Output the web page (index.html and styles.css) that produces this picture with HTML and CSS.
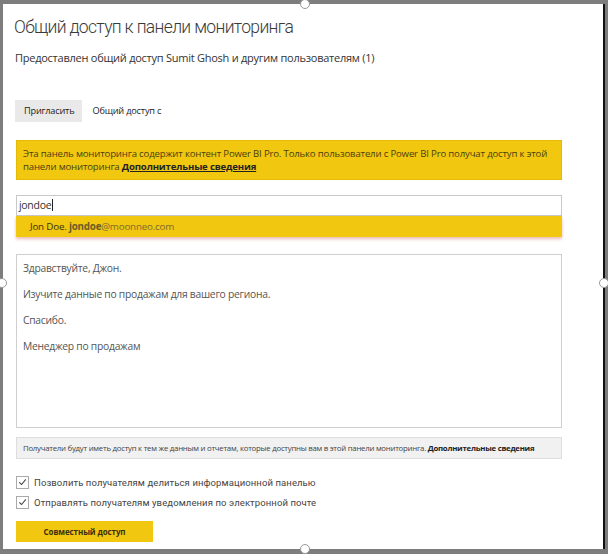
FILE: index.html
```html
<!DOCTYPE html>
<html lang="ru">
<head>
<meta charset="utf-8">
<link rel="stylesheet" href="styles.css">
</head>
<body>
<div class="dialog">
  <span class="handle handle-top"></span>
  <span class="handle handle-left"></span>
  <span class="handle handle-right"></span>
  <span class="handle handle-bottom"></span>

  <h1 class="title">Общий доступ к панели мониторинга</h1>
  <p class="subtitle">Предоставлен общий доступ Sumit Ghosh и другим пользователям (1)</p>

  <div class="tabs">
    <span class="tab tab-active">Пригласить</span>
    <span class="tab">Общий доступ с</span>
  </div>

  <div class="banner"><p class="banner-line">Эта панель мониторинга содержит контент Power BI Pro. Только пользователи с Power BI Pro получат доступ к этой</p><p class="banner-line">панели мониторинга <a class="banner-link">Дополнительные сведения</a></p></div>

  <div class="picker">
    <div class="input">jondoe<span class="caret"></span></div>
    <div class="suggestion"><span class="s-name">Jon Doe.</span> <span class="s-mail"><b>jondoe</b>@moonneo.com</span></div>
  </div>

  <div class="message">
    <p>Здравствуйте, Джон.</p>
    <p>Изучите данные по продажам для вашего региона.</p>
    <p>Спасибо.</p>
    <p>Менеджер по продажам</p>
  </div>

  <div class="note">Получатели будут иметь доступ к тем же данным и отчетам, которые доступны вам в этой панели мониторинга. <b>Дополнительные сведения</b></div>

  <label class="check"><span class="box"><svg viewBox="0 0 12 12" width="12" height="12"><path d="M2.5 6.3 L5 8.7 L9.6 3.2" fill="none" stroke="#444" stroke-width="1.1"/></svg></span>Позволить получателям делиться информационной панелью</label>
  <label class="check"><span class="box"><svg viewBox="0 0 12 12" width="12" height="12"><path d="M2.5 6.3 L5 8.7 L9.6 3.2" fill="none" stroke="#444" stroke-width="1.1"/></svg></span>Отправлять получателям уведомления по электронной почте</label>

  <button class="share">Совместный доступ</button>
</div>
</body>
</html>
```

FILE: styles.css
```css
html, body {
  margin: 0;
  padding: 0;
}
body {
  background: #7d7d7d;
  width: 608px;
  height: 554px;
  overflow: hidden;
  font-family: "Open Sans", "Noto Sans", sans-serif;
  color: #333;
}
.dialog {
  position: relative;
  box-sizing: border-box;
  margin: 4px 0 0 3px;
  width: 602px;
  height: 545px;
  background: #fff;
  border-right: 2px solid #111;
  padding: 10px 40px 0 11px;
}
.handle {
  position: absolute;
  width: 8px;
  height: 8px;
  border-radius: 50%;
  background: #fff;
  border: 1px solid #999;
}
.handle-top { top: -5px; left: 297px; }
.handle-bottom { bottom: -5px; left: 297px; }
.handle-left { left: -6px; top: 274px; }
.handle-right { right: -6px; top: 274px; }

.title {
  margin: 0;
  font-family: Roboto, "Open Sans", sans-serif;
  font-size: 17.5px;
  font-weight: 300;
  letter-spacing: -0.65px;
  color: #3a3a3a;
  line-height: 26px;
}
.subtitle {
  margin: 11px 0 0 1px;
  font-size: 11px;
  letter-spacing: -0.25px;
  line-height: 14px;
  color: #333;
}
.tabs {
  display: flex;
  align-items: center;
  margin: 35px 0 0 1px;
  height: 22px;
}
.tab {
  font-size: 9.2px;
  letter-spacing: -0.2px;
  color: #222;
  padding: 0 8px;
  line-height: 22px;
}
.tab-active {
  background: #e9e9e9;
  padding: 0 8px 0 9px;
  margin-right: 2px;
}
.banner {
  margin: 18px 0 0 2px;
  width: 546px;
  height: 40px;
  box-sizing: border-box;
  background: #f2c70f;
  border: 1px solid #e5ba05;
  padding: 6px 8px 0 6px;
  font-size: 9.6px;
  letter-spacing: -0.17px;
  color: #4a3f10;
}
.banner-line {
  margin: 0;
  line-height: 13px;
  white-space: nowrap;
}
.banner-link {
  font-weight: 700;
  color: #222;
  text-decoration: underline;
}
.picker {
  margin: 15px 0 0 2px;
  width: 546px;
}
.input {
  box-sizing: border-box;
  height: 21px;
  border: 1px solid #c8c8c8;
  padding: 0 2px;
  font-size: 10.5px;
  letter-spacing: -0.3px;
  line-height: 19px;
  color: #333;
}
.caret {
  display: inline-block;
  width: 1px;
  height: 12px;
  background: #222;
  vertical-align: -2px;
  margin-left: 1px;
}
.suggestion {
  height: 21px;
  background: #f2c70f;
  padding-left: 14px;
  font-size: 9.8px;
  letter-spacing: -0.2px;
  line-height: 21px;
  color: #3a3010;
  box-shadow: 0 2px 3px rgba(220, 120, 110, 0.5);
}
.s-mail {
  color: #7a6b33;
}
.s-mail b {
  color: #6b5c28;
}
.message {
  margin: 17px 0 0 2px;
  width: 546px;
  height: 174px;
  box-sizing: border-box;
  border: 1px solid #cfcfcf;
  padding: 6px 6px;
  font-size: 10.3px;
  letter-spacing: -0.25px;
  color: #555;
}
.message p {
  margin: 0;
  line-height: 14px;
  margin-bottom: 12px;
}
.note {
  margin: 9px 0 0 2px;
  width: 546px;
  height: 22px;
  box-sizing: border-box;
  background: #f1f1f1;
  border: 1px solid #dedede;
  padding: 0 6px;
  font-size: 7.8px;
  letter-spacing: -0.25px;
  line-height: 20px;
  white-space: nowrap;
  color: #444;
}
.note b {
  color: #222;
}
.check {
  display: flex;
  align-items: center;
  margin: 0 0 0 2px;
  height: 20px;
  font-family: Roboto, "Open Sans", sans-serif;
  font-size: 9.5px;
  letter-spacing: 0.1px;
  color: #444;
}
.note + .check {
  margin-top: 13px;
}
.box {
  box-sizing: border-box;
  width: 13px;
  height: 13px;
  border: 1px solid #aaa;
  margin-right: 5px;
  display: flex;
  align-items: center;
  justify-content: center;
}
.box svg {
  display: block;
}
.share {
  display: block;
  margin: 9px 0 0 2px;
  width: 137px;
  height: 21px;
  border: 0;
  background: #f2c70f;
  font-family: "Open Sans", "Noto Sans", sans-serif;
  font-size: 8px;
  font-weight: 700;
  letter-spacing: -0.1px;
  color: #3a3010;
  padding: 0;
}
```
